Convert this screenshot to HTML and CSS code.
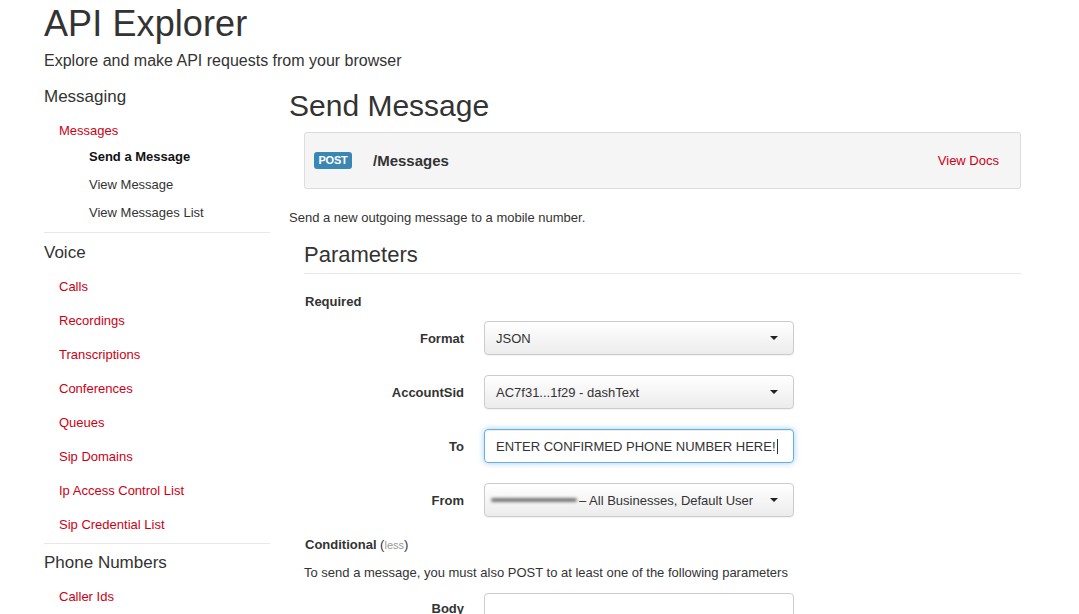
FILE: index.html
```html
<!DOCTYPE html>
<html>
<head>
<meta charset="utf-8">
<title>API Explorer</title>
<link rel="stylesheet" href="styles.css">
</head>
<body>
<div class="page">
  <header class="header">
    <h1 class="title">API Explorer</h1>
    <p class="lead">Explore and make API requests from your browser</p>
  </header>
  <div class="layout">
    <nav class="sidebar">
      <div class="nav-section nav-messaging">
        <h3 class="nav-heading">Messaging</h3>
        <a class="nav-link nav-link-top" href="#">Messages</a>
        <ul class="sub-list">
          <li class="sub-item active">Send a Message</li>
          <li class="sub-item">View Message</li>
          <li class="sub-item">View Messages List</li>
        </ul>
      </div>
      <div class="nav-section nav-voice">
        <h3 class="nav-heading">Voice</h3>
        <a class="nav-link" href="#">Calls</a>
        <a class="nav-link" href="#">Recordings</a>
        <a class="nav-link" href="#">Transcriptions</a>
        <a class="nav-link" href="#">Conferences</a>
        <a class="nav-link" href="#">Queues</a>
        <a class="nav-link" href="#">Sip Domains</a>
        <a class="nav-link" href="#">Ip Access Control List</a>
        <a class="nav-link" href="#">Sip Credential List</a>
      </div>
      <div class="nav-section nav-last">
        <h3 class="nav-heading">Phone Numbers</h3>
        <a class="nav-link" href="#">Caller Ids</a>
      </div>
    </nav>
    <main class="main">
      <h2 class="page-title">Send Message</h2>
      <div class="endpoint">
        <span class="badge">POST</span>
        <span class="endpoint-path">/Messages</span>
        <a class="docs-link" href="#">View Docs</a>
      </div>
      <p class="description">Send a new outgoing message to a mobile number.</p>
      <section class="params">
        <h3 class="params-title">Parameters</h3>
        <div class="group-title">Required</div>
        <div class="form-row first-row">
          <label class="form-label">Format</label>
          <div class="select"><span class="select-text">JSON</span><span class="caret"></span></div>
        </div>
        <div class="form-row">
          <label class="form-label">AccountSid</label>
          <div class="select"><span class="select-text">AC7f31...1f29 - dashText</span><span class="caret"></span></div>
        </div>
        <div class="form-row">
          <label class="form-label">To</label>
          <div class="input focus"><span class="input-text">ENTER CONFIRMED PHONE NUMBER HERE!</span><span class="cursor"></span></div>
        </div>
        <div class="form-row">
          <label class="form-label">From</label>
          <div class="select"><span class="select-text"><span class="blur"></span>&ndash; All Businesses, Default User</span><span class="caret"></span></div>
        </div>
        <div class="group-title cond-title">Conditional <span class="less">(<span class="less-word">less</span>)</span></div>
        <p class="cond-note">To send a message, you must also POST to at least one of the following parameters</p>
        <div class="form-row body-row">
          <label class="form-label">Body</label>
          <div class="input"></div>
        </div>
      </section>
    </main>
  </div>
</div>
</body>
</html>
```

FILE: styles.css
```css
* { box-sizing: border-box; }
html, body { margin: 0; padding: 0; background: #fff; }
body {
  font-family: "Liberation Sans", Arial, sans-serif;
  color: #333;
  font-size: 13px;
  overflow: hidden;
  height: 614px;
}
.page { padding-left: 44px; }

.header { padding-top: 4px; }
.title {
  margin: 0;
  font-size: 36px;
  font-weight: normal;
  line-height: 40px;
  letter-spacing: 0.1px;
}
.lead {
  margin: 7px 0 0 0;
  font-size: 16px;
  line-height: 20px;
}

.layout { display: flex; align-items: flex-start; margin-top: 14px; }

.sidebar { width: 226px; flex: 0 0 226px; }
.nav-section { border-bottom: 1px solid #e8e8e8; }
.nav-messaging { padding-bottom: 5px; }
.nav-voice { padding-bottom: 1px; }
.nav-last { border-bottom: none; }
.nav-heading {
  margin: 0;
  font-size: 17px;
  font-weight: normal;
  line-height: 24px;
}
.nav-voice .nav-heading { margin-top: 8px; }
.nav-last .nav-heading { margin-top: 7px; }
.nav-link {
  display: block;
  padding-left: 15px;
  color: #cc0014;
  text-decoration: none;
  font-size: 13px;
  line-height: 34px;
}
.nav-voice .nav-heading + .nav-link,
.nav-last .nav-heading + .nav-link { margin-top: 5px; }
.nav-link-top { line-height: 24px; margin-top: 10px; }
.sub-list { list-style: none; margin: 0; padding: 0 0 0 45px; }
.sub-item { line-height: 28px; font-size: 13px; color: #333; }
.sub-item.active { font-weight: bold; color: #111; }

.main { flex: 0 0 732px; width: 732px; margin-left: 19px; margin-top: 3px; }
.page-title {
  margin: 0;
  font-size: 30px;
  font-weight: normal;
  line-height: 36px;
}
.endpoint {
  margin: 8px 0 0 15px;
  height: 57px;
  border: 1px solid #dcdcdc;
  border-radius: 3px;
  background: #f5f5f5;
  display: flex;
  align-items: center;
  padding: 0 22px 0 9px;
}
.badge {
  display: inline-block;
  background: #3b87b3;
  color: #fff;
  font-weight: bold;
  font-size: 11px;
  line-height: 17px;
  height: 17px;
  width: 38px;
  text-align: center;
  border-radius: 3px;
  letter-spacing: -0.2px;
}
.endpoint-path {
  margin-left: 21px;
  font-weight: bold;
  font-size: 15px;
  color: #333;
  flex: 1;
}
.docs-link { color: #cc0014; text-decoration: none; font-size: 13px; margin-right: -1px; }

.description { margin: 19px 0 0 0; line-height: 20px; font-size: 13px; }

.params { margin-left: 15px; }
.params-title {
  margin: 13px 0 0 0;
  font-size: 22px;
  font-weight: normal;
  line-height: 28px;
  padding-bottom: 4px;
  border-bottom: 1px solid #e8e8e8;
}
.group-title {
  margin-top: 19px;
  font-weight: bold;
  font-size: 13px;
  line-height: 18px;
  padding-left: 1px;
}
.cond-title { margin-top: 19px; }
.less { font-weight: normal; color: #333; }
.less-word { color: #999; font-size: 11px; }
.cond-note { margin: 10px 0 0 0; line-height: 18px; font-size: 13px; }

.form-row { display: flex; align-items: center; margin-top: 20px; }
.form-row.first-row { margin-top: 10px; }
.form-row.body-row { margin-top: 11px; }
.form-label {
  width: 160px;
  text-align: right;
  font-weight: bold;
  font-size: 13px;
}
.body-row .form-label { align-self: flex-start; padding-top: 8px; }
.select, .input {
  margin-left: 20px;
  width: 310px;
  height: 34px;
  border: 1px solid #ccc;
  border-radius: 4px;
  display: flex;
  align-items: center;
  padding: 0 15px 0 11px;
  font-size: 13px;
  color: #333;
}
.select {
  background: linear-gradient(#ffffff, #ececec);
  box-shadow: 0 1px 1px rgba(0,0,0,0.05);
}
.select-text { flex: 1; display: flex; align-items: center; white-space: nowrap; }
.caret {
  width: 0; height: 0;
  border-left: 4px solid transparent;
  border-right: 4px solid transparent;
  border-top: 4px solid #222;
}
.blur {
  display: inline-block;
  width: 86px;
  height: 4px;
  margin-left: -5px;
  margin-right: 2px;
  background: #777;
  border-radius: 2px;
  filter: blur(1.6px);
}
.input { background: #fff; }
.input.focus {
  border-color: #66afe9;
  box-shadow: inset 0 1px 1px rgba(0,0,0,0.075), 0 0 6px rgba(102,175,233,0.6);
}
.input-text { white-space: nowrap; font-size: 13px; }
.cursor { display: inline-block; width: 1px; height: 15px; background: #333; margin-left: 1px; }
```
